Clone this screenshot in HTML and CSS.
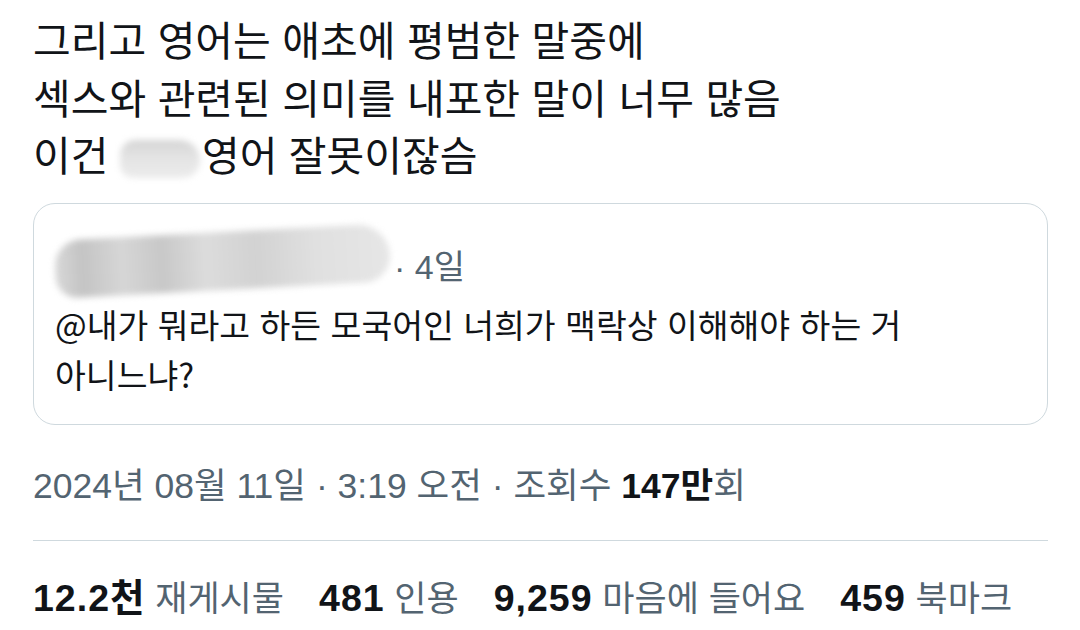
FILE: index.html
```html
<!DOCTYPE html>
<html lang="ko">
<head>
<meta charset="utf-8">
<link rel="stylesheet" href="styles.css">
</head>
<body>
<main class="tweet">
  <div class="body-text">
    <p class="line">그리고 영어는 애초에 평범한 말중에</p>
    <p class="line">섹스와 관련된 의미를 내포한 말이 너무 많음</p>
    <p class="line">이건 <span class="redact redact-inline"></span>영어 잘못이잖슴</p>
  </div>
  <section class="quote">
    <div class="quote-head">
      <span class="redact redact-name"></span>
      <span class="quote-time">· 4일</span>
    </div>
    <p class="quote-text">@내가 뭐라고 하든 모국어인 너희가 맥락상 이해해야 하는 거<br>아니느냐?</p>
  </section>
  <div class="meta">2024년 08월 11일 · 3:19 오전 · 조회수 <b class="num">147만</b>회</div>
  <div class="stats">
    <span class="stat"><b class="num">12.2천</b> 재게시물</span>
    <span class="stat"><b class="num">481</b> 인용</span>
    <span class="stat"><b class="num">9,259</b> 마음에 들어요</span>
    <span class="stat"><b class="num">459</b> 북마크</span>
  </div>
</main>
</body>
</html>
```

FILE: styles.css
```css
html, body {
  margin: 0;
  padding: 0;
  background: #ffffff;
}
body {
  font-family: "Noto Sans CJK KR", "Noto Sans", sans-serif;
  color: #111418;
  width: 1080px;
  height: 630px;
  overflow: hidden;
}
.tweet {
  padding: 10px 32px 0 33px;
}
.body-text {
  display: flex;
  flex-direction: column;
}
.line {
  margin: 0;
  font-size: 41px;
  line-height: 57.5px;
  white-space: nowrap;
}
.redact {
  display: inline-block;
  filter: blur(3px);
  border-radius: 40px;
}
.redact-inline {
  width: 80px;
  height: 38px;
  vertical-align: -7px;
  margin-right: 2px;
  background: linear-gradient(180deg, #d4d4d4, #e4e4e4 45%, #ececec);
  border-radius: 30px 40px 34px 26px;
}
.quote {
  margin-top: 20px;
  border: 1px solid #cfd9de;
  border-radius: 22px;
  height: 222px;
  padding: 22px 24px 0 21px;
  box-sizing: border-box;
}
.quote-head {
  display: flex;
  align-items: center;
  gap: 4px;
  height: 70px;
}
.redact-name {
  width: 335px;
  height: 58px;
  background: linear-gradient(90deg, #d8d8d8, #c4c4c4 8%, #d6d6d6 20%, #c8c8c8 32%, #dcdcdc 45%, #d2d2d2 60%, #e0e0e0 78%, #e6e6e6);
  border-radius: 30px 36px 30px 24px;
  transform: rotate(-3deg);
}
.quote-time {
  color: #536471;
  font-family: "Liberation Sans", "Noto Sans CJK KR", sans-serif;
  font-size: 34px;
  margin-top: 8px;
}
.quote-text {
  margin: 3px 0 0 0;
  font-size: 33.5px;
  line-height: 50px;
  white-space: nowrap;
}
.meta {
  margin-top: 37px;
  color: #536471;
  font-family: "Liberation Sans", "Noto Sans CJK KR", sans-serif;
  font-size: 35.5px;
  line-height: 48px;
  padding-bottom: 30px;
  border-bottom: 1px solid #cfd9de;
  white-space: nowrap;
}
.num {
  color: #111418;
  font-weight: 700;
}
.stats {
  display: flex;
  gap: 35px;
  margin-top: 35px;
  font-family: "Liberation Sans", "Noto Sans CJK KR", sans-serif;
  font-size: 35px;
  line-height: 44px;
  color: #536471;
  white-space: nowrap;
}
.stats .num {
  font-size: 37.5px;
  letter-spacing: 1px;
}
```
